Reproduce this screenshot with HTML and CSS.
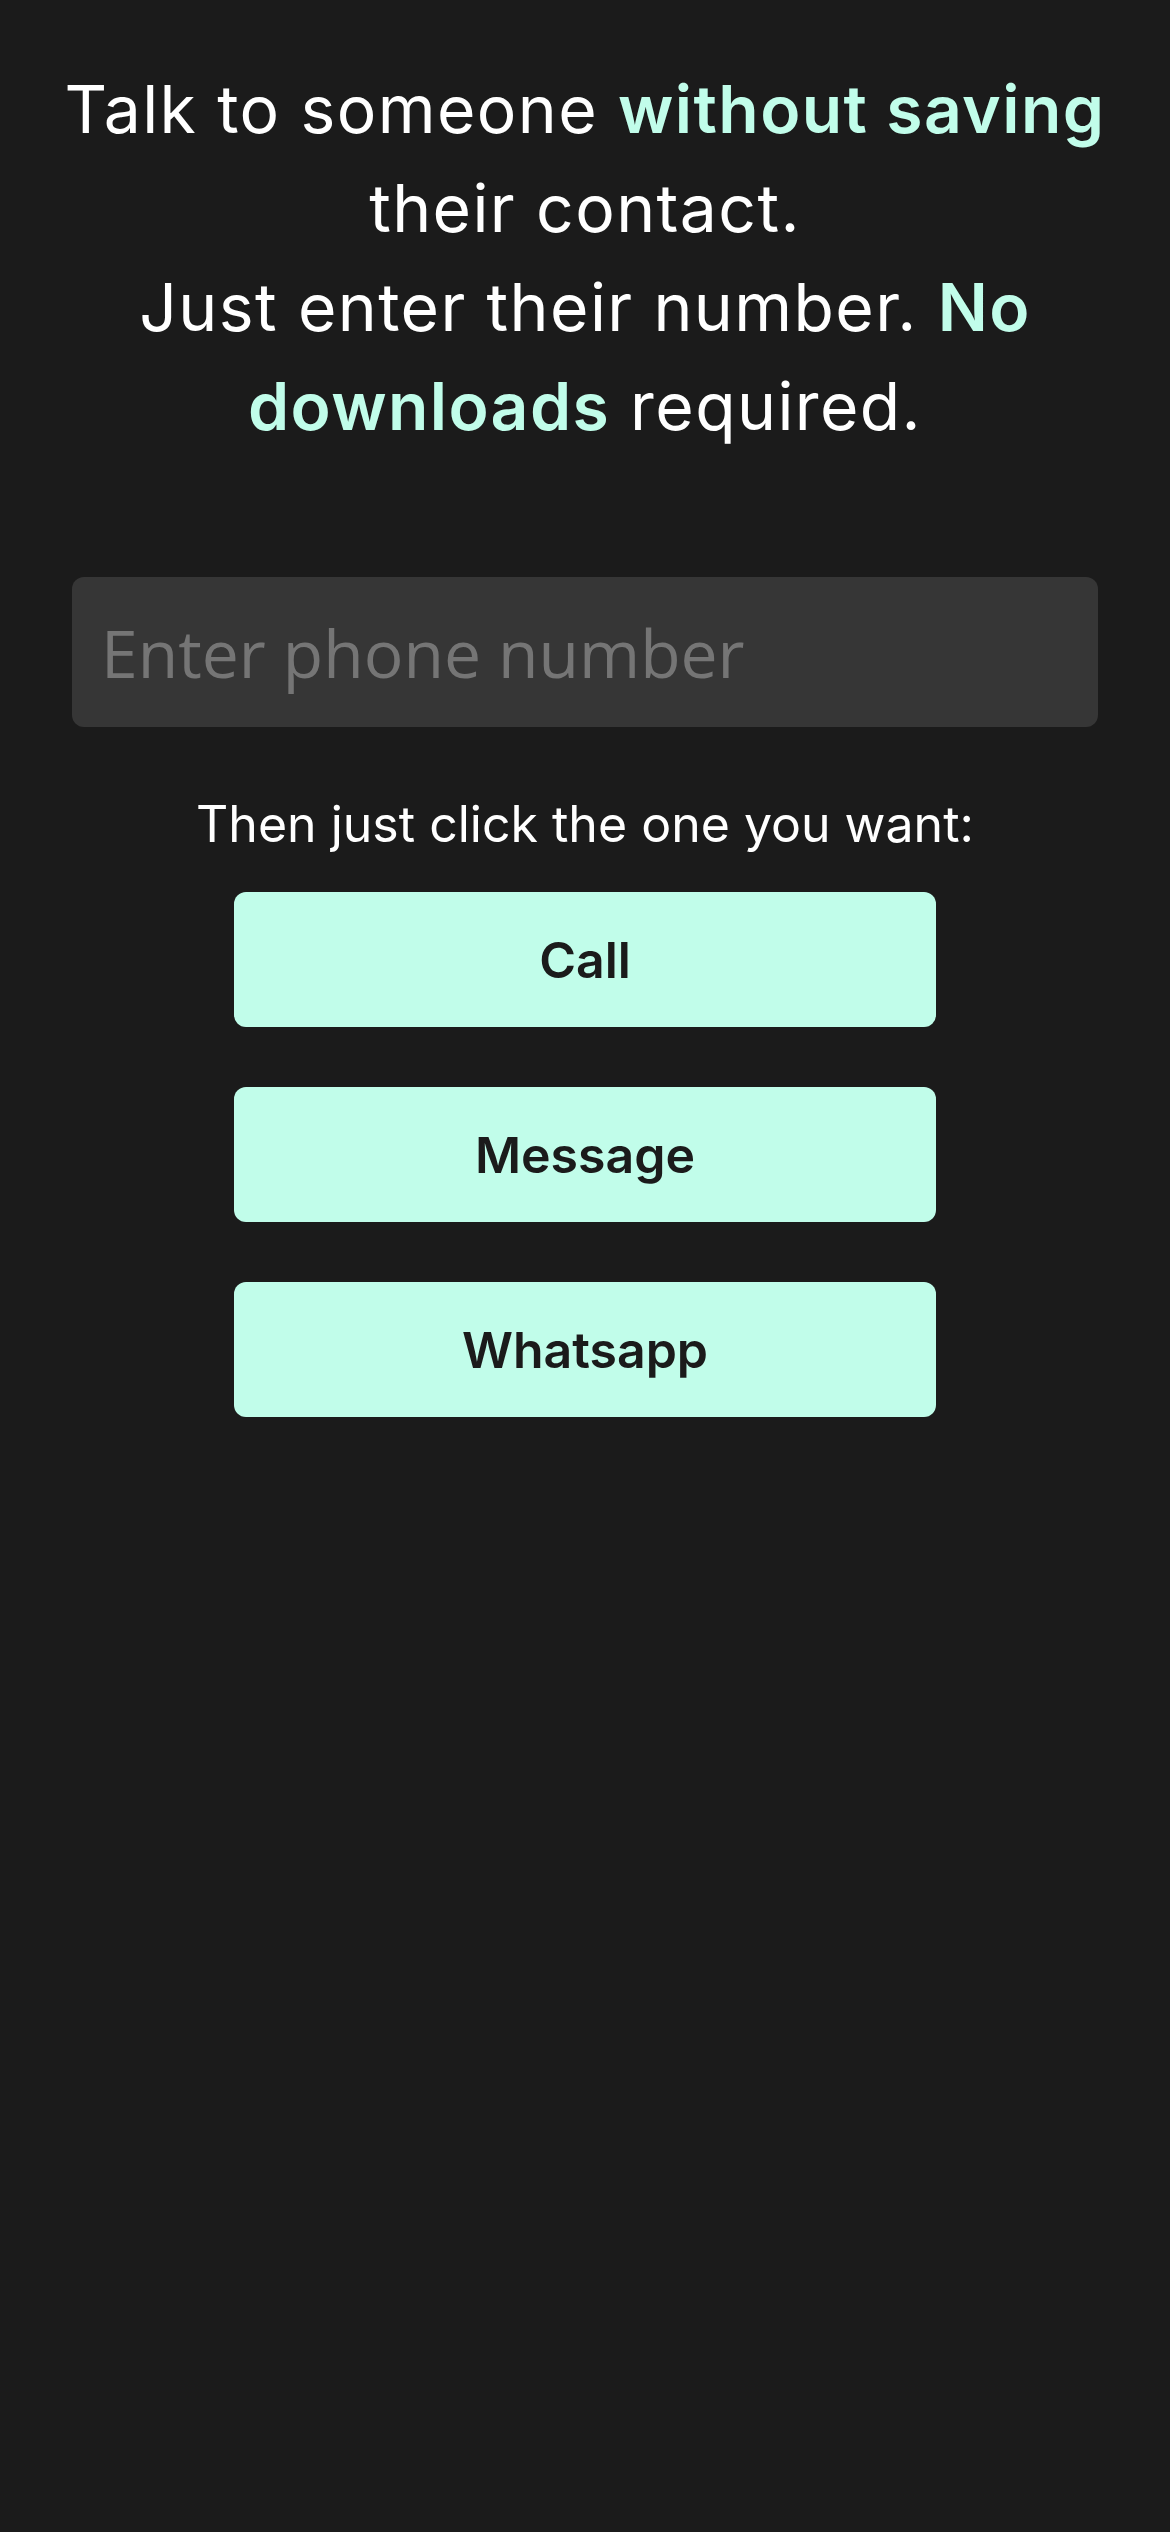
FILE: index.html
```html
<!DOCTYPE html>
<html lang="en">
<head>
<meta charset="utf-8">
<title>Talk without saving</title>
<link rel="stylesheet" href="styles.css">
</head>
<body>
<main class="page">
  <h1 class="headline">Talk to someone <span class="accent">without saving</span> their contact.<br>Just enter their number. <span class="accent">No</span> <span class="accent">downloads</span> required.</h1>
  <input class="phone" type="tel" placeholder="Enter phone number">
  <p class="hint">Then just click the one you want:</p>
  <div class="actions">
    <button class="action" type="button">Call</button>
    <button class="action" type="button">Message</button>
    <button class="action" type="button">Whatsapp</button>
  </div>
</main>
</body>
</html>
```
FILE: styles.css
```css
html, body {
  margin: 0;
  padding: 0;
  background: #1b1b1b;
}
body {
  min-height: 2532px;
  font-family: "Inter", "Noto Sans", sans-serif;
  color: #ffffff;
}
.page {
  display: flex;
  flex-direction: column;
  align-items: center;
  padding: 60px 30px 0;
}
.headline {
  margin: 0;
  font-size: 66px;
  line-height: 99px;
  font-weight: 400;
  letter-spacing: 1.4px;
  text-align: center;
}
.accent {
  color: #c1fdea;
  font-weight: 600;
}
.phone {
  box-sizing: border-box;
  align-self: stretch;
  margin: 121px 42px 0;
  height: 150px;
  padding: 0 29px;
  border: none;
  border-radius: 12px;
  background: #363636;
  color: #ffffff;
  font-family: "Open Sans", sans-serif;
  font-size: 66px;
  outline: none;
}
.phone::placeholder {
  color: #757575;
}
.hint {
  margin: 67px 0 0;
  font-size: 50px;
  line-height: 60px;
  text-align: center;
}
.actions {
  display: flex;
  flex-direction: column;
  gap: 60px;
  width: 702px;
  margin-top: 38px;
}
.action {
  height: 135px;
  border: none;
  border-radius: 12px;
  background: #c1fdea;
  color: #1b1b1b;
  font-family: "Inter", "Noto Sans", sans-serif;
  font-weight: 600;
  font-size: 50px;
}
```
